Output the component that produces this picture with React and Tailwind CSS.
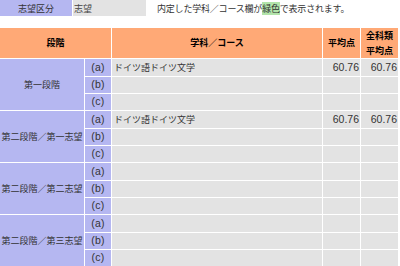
import React from "react";

const cjk = "font-['Noto_Sans_CJK_JP','Noto_Sans_CJK_SC',sans-serif]";
const lat = "font-['Liberation_Sans','Noto_Sans_CJK_JP',sans-serif]";

const groups = [
  { label: "第一段階", rows: [["ドイツ語ドイツ文学", "60.76", "60.76"], ["", "", ""], ["", "", ""]] },
  { label: "第二段階／第一志望", rows: [["ドイツ語ドイツ文学", "60.76", "60.76"], ["", "", ""], ["", "", ""]] },
  { label: "第二段階／第二志望", rows: [["", "", ""], ["", "", ""], ["", "", ""]] },
  { label: "第二段階／第三志望", rows: [["", "", ""], ["", "", ""], ["", "", ""]] },
];
const letters = ["(a)", "(b)", "(c)"];

export default function App() {
  return (
    <div className={`w-[400px] h-[266px] overflow-hidden bg-white ${cjk}`}>
      <div className="flex items-center h-[16px]">
        <div className="w-[72px] h-full bg-[#b5b7f1] flex items-center justify-center text-[9px] text-[#333] leading-none">志望区分</div>
        <div className="ml-px w-[73px] h-full bg-[#e3e3e3] flex items-center pl-[1px] text-[9px] text-[#444] leading-none">志望</div>
        <div className="ml-[11px] text-[9px] text-[#333] leading-none whitespace-nowrap tracking-[-0.2px]">
          内定した学科／コース欄が<span className="bg-[#b2e4aa]">緑色</span>で表示されます。
        </div>
      </div>
      <div
        className="mt-[12px] grid gap-px grid-cols-[84px_26px_210px_37px_37px] grid-rows-[30px_repeat(4,17px_16px_16px)]"
      >
        <div className="col-span-2 bg-[#ffa976] flex items-center justify-center text-[9px] font-bold text-black">段階</div>
        <div className="bg-[#ffa976] flex items-center justify-center text-[9px] font-bold text-black">学科／コース</div>
        <div className="bg-[#ffa976] flex items-center justify-center text-[9px] font-bold text-black">平均点</div>
        <div className="bg-[#ffa976] flex flex-col items-center justify-center text-[9px] font-bold text-black leading-[15px]">
          <span>全科類</span>
          <span>平均点</span>
        </div>
        {groups.map((g, gi) => (
          <React.Fragment key={gi}>
            {g.rows.map((r, ri) => (
              <React.Fragment key={ri}>
                {ri === 0 && (
                  <div className="row-span-3 bg-[#b5b7f1] flex items-center justify-center text-[9px] text-[#333] whitespace-nowrap">
                    {g.label}
                  </div>
                )}
                <div className={`bg-[#b5b7f1] flex items-center justify-center text-[10.5px] text-[#333] tracking-[0.3px] ${lat}`}>{letters[ri]}</div>
                <div className="bg-[#e3e3e3] flex items-center pl-[2px] text-[9px] text-[#333] whitespace-nowrap">{r[0]}</div>
                <div className={`bg-[#e3e3e3] flex items-center justify-end pr-[1px] text-[10.5px] text-[#333] ${lat}`}>{r[1]}</div>
                <div className={`bg-[#e3e3e3] flex items-center justify-end pr-[1px] text-[10.5px] text-[#333] ${lat}`}>{r[2]}</div>
              </React.Fragment>
            ))}
          </React.Fragment>
        ))}
      </div>
    </div>
  );
}
